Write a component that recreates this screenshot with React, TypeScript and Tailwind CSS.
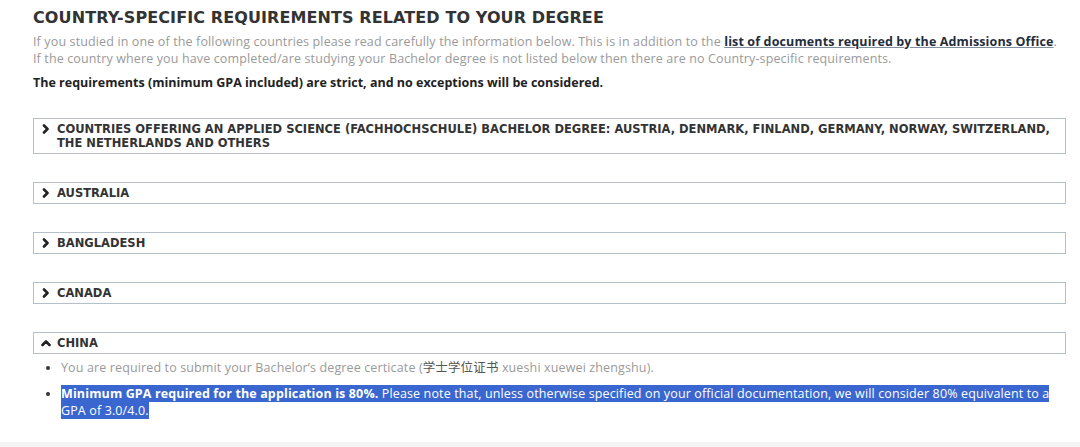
import React from "react";

const Chevron = ({ up }: { up?: boolean }) => (
  <svg width="10" height="10" viewBox="0 0 10 10" className="shrink-0">
    {up ? (
      <path d="M1.5 7 L5 3.5 L8.5 7" fill="none" stroke="#222" strokeWidth="2.6" strokeLinecap="round" strokeLinejoin="round" />
    ) : (
      <path d="M3 1.5 L6.5 5 L3 8.5" fill="none" stroke="#222" strokeWidth="2.6" strokeLinecap="round" strokeLinejoin="round" />
    )}
  </svg>
);

const Item = ({ title, up }: { title: React.ReactNode; up?: boolean }) => (
  <div className="border border-[#b4bfc9] flex items-start gap-[6px] pl-[7px] pr-[6px] py-[3px]">
    <div className="pt-[2px]">
      <Chevron up={up} />
    </div>
    <div className="text-[11.5px] leading-[14px] font-semibold text-[#333] uppercase">{title}</div>
  </div>
);

export default function App() {
  return (
    <div
      className="w-[1080px] h-[447px] overflow-hidden bg-white flex flex-col"
      style={{ fontFamily: '"DejaVu Sans", "Noto Sans CJK SC", sans-serif' }}
    >
      <div className="flex-1 pl-[33px] pr-[15px] pt-[7px]">
        <h2 className="text-[16px] leading-[22px] font-semibold text-[#333] tracking-[0.1px]">
          COUNTRY-SPECIFIC REQUIREMENTS RELATED TO YOUR DEGREE
        </h2>
        <div style={{ fontFamily: '"Open Sans", "Noto Sans CJK SC", sans-serif' }}>
          <p className="mt-[4px] text-[12.5px] leading-[17px] tracking-[0.13px] text-[#9a9a9a]">
            If you studied in one of the following countries please read carefully the information below. This is in addition to the{" "}
            <a className="font-bold text-[#1f2d3d] underline decoration-[#7f8fa0]">list of documents required by the Admissions Office</a>.
            <br />
            If the country where you have completed/are studying your Bachelor degree is not listed below then there are no Country-specific requirements.
          </p>
          <p className="mt-[7px] text-[12.5px] leading-[17px] font-bold text-[#222]">
            The requirements (minimum GPA included) are strict, and no exceptions will be considered.
          </p>
        </div>
        <div className="mt-[27px] flex flex-col gap-[28px] w-[1033px]">
          <Item
            title={
              <>
                Countries offering an Applied Science (Fachhochschule) Bachelor degree: Austria, Denmark, Finland, Germany, Norway, Switzerland, The Netherlands and others
              </>
            }
          />
          <Item title="Australia" />
          <Item title="Bangladesh" />
          <Item title="Canada" />
          <div>
            <Item title="China" up />
            <ul
              className="mt-[5px] pl-[28px] list-disc text-[12.5px] leading-[17px] tracking-[0.13px] text-[#9a9a9a] marker:text-[#333]"
              style={{ fontFamily: '"Open Sans", "Noto Sans CJK SC", sans-serif' }}
            >
              <li>
                You are required to submit your Bachelor’s degree certicate (<span className="text-[#555]">学士学位证书</span> xueshi xuewei zhengshu).
              </li>
              <li className="mt-[9px]">
                <span className="bg-[#3a66cf] text-white">
                  <b className="font-bold">Minimum GPA required for the application is 80%.</b> Please note that, unless otherwise specified on your official documentation, we will consider 80% equivalent to a GPA of 3.0/4.0.
                </span>
              </li>
            </ul>
          </div>
        </div>
      </div>
      <div className="h-[5px] bg-[#f4f4f4]" />
    </div>
  );
}
